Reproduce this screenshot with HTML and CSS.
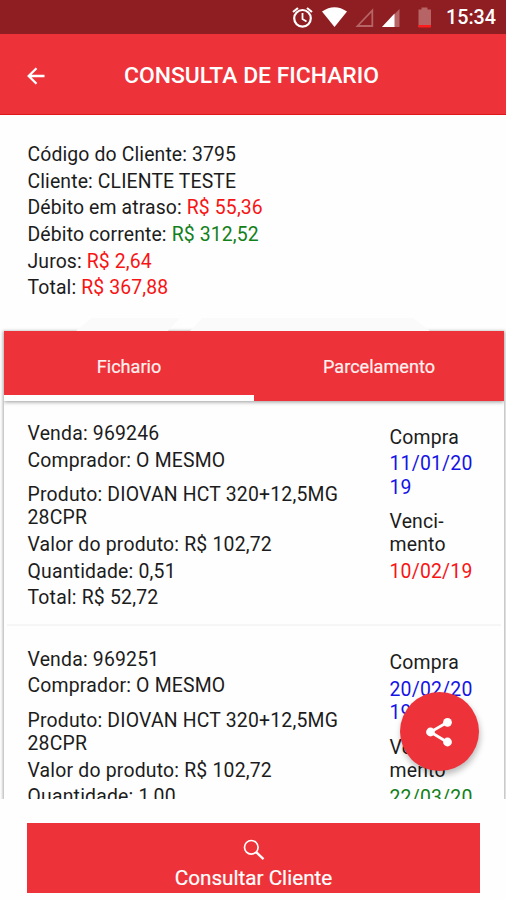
FILE: index.html
```html
<!DOCTYPE html>
<html lang="pt-BR">
<head>
<meta charset="utf-8">
<title>Consulta de Fichario</title>
<link rel="stylesheet" href="styles.css">
</head>
<body>
<div class="screen">
  <div class="status">
    <svg class="status-icons" width="160" height="34" viewBox="0 0 160 34">
      <g fill="none" stroke="#fff" stroke-width="2.2"><circle cx="22.5" cy="18.3" r="8.3"/><path d="M22.5 13v6l4 2.5" stroke-width="1.8"/><path d="M13 12l5-4M32 12l-5-4"/></g>
      <path d="M42 11.5Q54.500 3 67 11.500L54.500 27z" fill="#fff"/>
      <path d="M92.300 10.500v15.500H77.500z" fill="none" stroke="#b66466" stroke-width="1.800"/>
      <path d="M119.500 9v18h-17.500z" fill="#b66466"/><path d="M114.500 13.500V27h-12.500z" fill="#fff"/>
      <path d="M138.500 9.500h3v-2h6v2h3.500V27h-12.500z" fill="#b66466"/><path d="M138.500 25h12.500v2.500h-12.500z" fill="#ff1c1c"/>
    </svg>
    <span class="clock">15:34</span>
  </div>
  <header class="appbar">
    <svg class="back" width="18" height="18" viewBox="0 0 18 18"><path d="M9.500 1.200L1.700 9l7.800 7.800M2 9h15.500" fill="none" stroke="#fff" stroke-width="2.300"/></svg>
    <h1 class="title">CONSULTA DE FICHARIO</h1>
  </header>
  <section class="summary lines">
    <p>Código do Cliente: 3795</p>
    <p>Cliente: CLIENTE TESTE</p>
    <p>Débito em atraso: <span class="red">R$ 55,36</span></p>
    <p>Débito corrente: <span class="green">R$ 312,52</span></p>
    <p>Juros: <span class="red">R$ 2,64</span></p>
    <p>Total: <span class="red">R$ 367,88</span></p>
  </section>
  <div class="watermark"><i></i><i class="wide"></i></div>
  <main class="card">
    <nav class="tabs"><div class="tab active">Fichario</div><div class="tab">Parcelamento</div></nav>
    <article class="entry">
      <div class="lines">
        <p>Venda: 969246</p><p>Comprador: O MESMO</p>
        <p class="group">Produto: DIOVAN HCT 320+12,5MG 28CPR</p>
        <p>Valor do produto: R$ 102,72</p><p>Quantidade: 0,51</p><p>Total: R$ 52,72</p>
      </div>
      <div class="lines dates">
        <p>Compra</p><p class="blue">11/01/20<br>19</p>
        <p class="group">Venci-<br>mento</p><p class="red">10/02/19</p>
      </div>
    </article>
    <article class="entry">
      <div class="lines">
        <p>Venda: 969251</p><p>Comprador: O MESMO</p>
        <p class="group">Produto: DIOVAN HCT 320+12,5MG 28CPR</p>
        <p>Valor do produto: R$ 102,72</p><p>Quantidade: 1,00</p>
      </div>
      <div class="lines dates">
        <p>Compra</p><p class="blue">20/02/20<br>19</p>
        <p class="group">Venci-<br>mento</p><p class="green">22/03/20</p>
      </div>
    </article>
  </main>
  <footer class="footer">
    <button class="search">
      <svg width="22" height="22" viewBox="0 0 22 22"><circle cx="8.300" cy="8.300" r="6.800" fill="none" stroke="#fff" stroke-width="1.700"/><path d="M13.200 13.200l7.300 7" stroke="#fff" stroke-width="2.300"/></svg>
      <span>Consultar Cliente</span>
    </button>
  </footer>
  <button class="fab" aria-label="Compartilhar">
    <svg width="30" height="32" viewBox="0 0 30 32"><path d="M22 6.500L5.500 16L22 26" fill="none" stroke="#fff" stroke-width="2.800"/><g fill="#fff"><circle cx="22.500" cy="6.300" r="4.400"/><circle cx="5.500" cy="16" r="4.400"/><circle cx="22.500" cy="26" r="4.400"/></g></svg>
  </button>
</div>
</body>
</html>
```
FILE: styles.css
```css
* { box-sizing: border-box; }
body { margin: 0; background: #fefefe; font-family: Roboto, "Liberation Sans", sans-serif; color: #1c1c1c; }
p, h1 { margin: 0; }
button { border: 0; padding: 0; font: inherit; color: #fff; background: #ee3239; }
.screen { position: relative; width: 506px; height: 900px; overflow: hidden; display: flex; flex-direction: column; }
.status { height: 34px; flex: none; background: #8e1e22; display: flex; justify-content: flex-end; align-items: center; padding-right: 10px; }
.clock { width: 50px; margin-left: 6px; color: #fff; font-size: 19.7px; font-weight: 500; line-height: 34px; padding-top: 2px; white-space: nowrap; }
.appbar { height: 81px; flex: none; background: #ee3239; border-bottom: 1px solid #e0161d; display: flex; align-items: center; padding-left: 27px; color: #fff; }
.back { margin-top: 3px; }
.title { margin: 3px 0 0 79px; font-size: 22.9px; font-weight: 500; line-height: 30px; white-space: nowrap; }
.lines { display: flex; flex-direction: column; gap: 3.4px; font-size: 19.4px; line-height: 23.3px; letter-spacing: 0.2px; }
.summary { padding: 28px 27px 0 27.5px; height: 203px; flex: none; letter-spacing: 0.13px; }
.red { color: #f81414; }
.green { color: #12801a; }
.blue { color: #1414e6; }
.watermark { height: 13px; padding-top: 0; flex: none; display: flex; gap: 10px; padding: 0 76px; }
.watermark i { width: 105px; background: #fafafa; clip-path: polygon(15% 0, 100% 0, 88% 100%, 0 100%); }
.watermark .wide { width: 242px; clip-path: polygon(5% 0, 93% 0, 100% 100%, 0 100%); }
.card { height: 468px; flex: none; margin: 0 2px 0 4px; overflow: hidden; background: #fefefe; box-shadow: 0 1px 3px 1px #aaa; }
.tabs { display: flex; height: 70px; background: #ee3239; box-shadow: 0 1px 4px #999; }
.tab { flex: 1; color: #fff0f0; font-size: 18.1px; line-height: 72px; text-align: center; -webkit-text-stroke: 0.2px #fff0f0; }
.active { border-bottom: 6px solid #fefefe; }
.entry { display: flex; height: 225.3px; margin: 0 3px; padding: 21px 0 0 20.5px; border-bottom: 2px solid #f6f6f6; }
.entry + .entry { padding-top: 21.4px; }
.entry .lines { width: 328px; flex: none; }
.entry .group { margin-top: 7.7px; }
.entry .dates { width: 100px; margin: 3.600px 0 0 34px; }
.footer { flex: 1; z-index: 1; background: #fefefe; position: relative; padding: 24px 26px 0 27px; }
.search { width: 453px; height: 70px; display: flex; flex-direction: column; align-items: center; padding-top: 16px; font-size: 20.7px; line-height: 26px; -webkit-text-stroke: 0.2px #fff; }
.search svg { flex: none; margin-bottom: 4px; }
.fab { position: absolute; z-index: 2; left: 400px; top: 692px; width: 79px; height: 79px; border-radius: 50%; display: flex; align-items: center; justify-content: center; box-shadow: 1px 4px 6px #0004; }
```
